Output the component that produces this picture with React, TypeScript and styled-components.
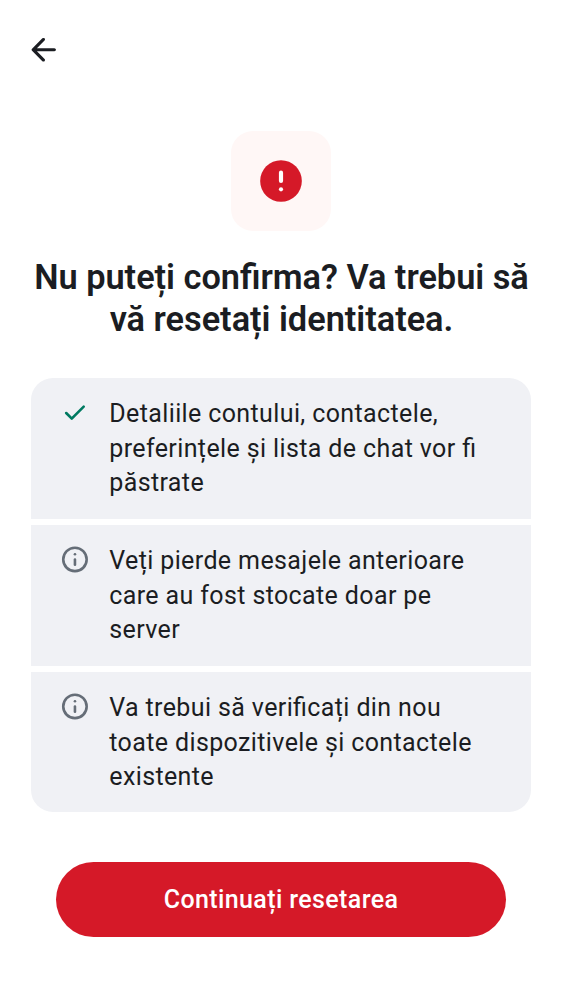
import React from 'react';
import styled, { createGlobalStyle } from 'styled-components';

const GlobalStyle = createGlobalStyle`
  * { box-sizing: border-box; }
  body { margin: 0; background: #fff; color: #1b1d22; font-family: Roboto, sans-serif; }
`;
const Screen = styled.main`
  width: 562px; height: 1000px; background: #fff;
  display: flex; flex-direction: column; overflow: hidden;
`;
const TopBar = styled.header`
  height: 100px; padding: 31px 0 0 25px; flex: none;
`;
const BackButton = styled.button`
  display: block; border: 0; padding: 0; background: none; width: 37.5px; height: 37.5px; color: #1b1d22;
`;
const Glyph = styled.svg`
  display: block; flex: none;
`;
const Hero = styled.section`
  display: flex; flex-direction: column; align-items: center; padding-top: 31px;
`;
const AlertTile = styled.div`
  width: 100px; height: 100px; border-radius: 22px; background: #fff7f6;
  display: grid; place-items: center;
`;
const Title = styled.h1`
  margin: 25px 0 0; font-size: 34.375px; line-height: 42.2px; font-weight: 600; text-align: center; white-space: nowrap;
  letter-spacing: -0.03px; font-feature-settings: "liga" 1; padding-left: 1px;
`;
const List = styled.ul`
  list-style: none; margin: 37.6px 31px 0; padding: 0; display: flex; flex-direction: column; gap: 6.1px;
  border-radius: 22px; overflow: hidden;
`;
const Item = styled.li`
  height: 140.75px; background: #f0f1f5; display: flex; gap: 19px; padding: 19px 28px;
`;
const ItemText = styled.p`
  margin: 0; padding-top: 0.4px; font-size: 25px; line-height: 34.5px; letter-spacing: 0.38px; white-space: nowrap;
  font-feature-settings: "liga" 1;
`;
const Footer = styled.footer`
  padding: 50px 56px 0;
`;
const PrimaryButton = styled.button`
  display: block; width: 450px; height: 75px; border: 0; border-radius: 38px; background: #d51928; color: #fff;
  font: 500 25px/34px Roboto, sans-serif; letter-spacing: 0.39px; padding: 1px 0 0;
`;

const CheckIcon = () => (
  <Glyph width="31.25" height="31.25" viewBox="-0.25 0 24 24" fill="#007a61">
    <path d="m9.55 15.15 8.475-8.475q.3-.3.7-.3t.7.3.3.713-.3.712l-9.175 9.2q-.3.3-.7.3t-.7-.3L4.55 13q-.3-.3-.287-.713.012-.412.312-.712t.713-.3.712.3z" />
  </Glyph>
);
const InfoIcon = () => (
  <Glyph width="31.25" height="31.25" viewBox="-0.25 0.15 24 24" fill="none" stroke="#656d77" strokeWidth="2">
    <circle cx="12" cy="12" r="9" />
    <path d="M12 12v4" strokeLinecap="round" />
    <circle cx="12" cy="8" r="1" fill="#656d77" stroke="none" />
  </Glyph>
);

const items = [
  { kept: true, lines: ['Detaliile contului, contactele,', 'preferințele și lista de chat vor fi', 'păstrate'] },
  { kept: false, lines: ['Veți pierde mesajele anterioare', 'care au fost stocate doar pe', 'server'] },
  { kept: false, lines: ['Va trebui să verificați din nou', 'toate dispozitivele și contactele', 'existente'] },
];

export default function App() {
  return (
    <Screen>
      <GlobalStyle />
      <TopBar>
        <BackButton aria-label="Înapoi">
          <Glyph width="37.5" height="37.5" viewBox="0.2 0 24 24" fill="currentColor">
            <path d="m7.825 13 4.9 4.9q.3.3.287.7-.012.4-.312.7-.3.275-.7.288-.4.012-.7-.288l-6.6-6.6a.9.9 0 0 1-.213-.325A1.1 1.1 0 0 1 4.425 12q0-.2.062-.375A.9.9 0 0 1 4.7 11.3l6.6-6.6q.275-.275.688-.275t.712.275q.3.3.3.713 0 .412-.3.712L7.825 11H19q.424 0 .713.287.287.288.287.713 0 .424-.287.713A.97.97 0 0 1 19 13z" />
          </Glyph>
        </BackButton>
      </TopBar>
      <Hero>
        <AlertTile>
          <Glyph width="50" height="50" viewBox="0 0 24 24">
            <circle cx="12" cy="12" r="10" fill="#d51928" />
            <path d="M12 8v4" stroke="#fff" strokeWidth="2" strokeLinecap="round" />
            <circle cx="12" cy="16" r="1" fill="#fff" />
          </Glyph>
        </AlertTile>
        <Title>Nu puteți confirma? Va trebui să<br />vă resetați identitatea.</Title>
      </Hero>
      <List>
        {items.map((item) => (
          <Item key={item.lines[0]}>
            {item.kept ? <CheckIcon /> : <InfoIcon />}
            <ItemText>
              {item.lines.map((line) => <React.Fragment key={line}>{line}<br /></React.Fragment>)}
            </ItemText>
          </Item>
        ))}
      </List>
      <Footer>
        <PrimaryButton>Continuați resetarea</PrimaryButton>
      </Footer>
    </Screen>
  );
}
